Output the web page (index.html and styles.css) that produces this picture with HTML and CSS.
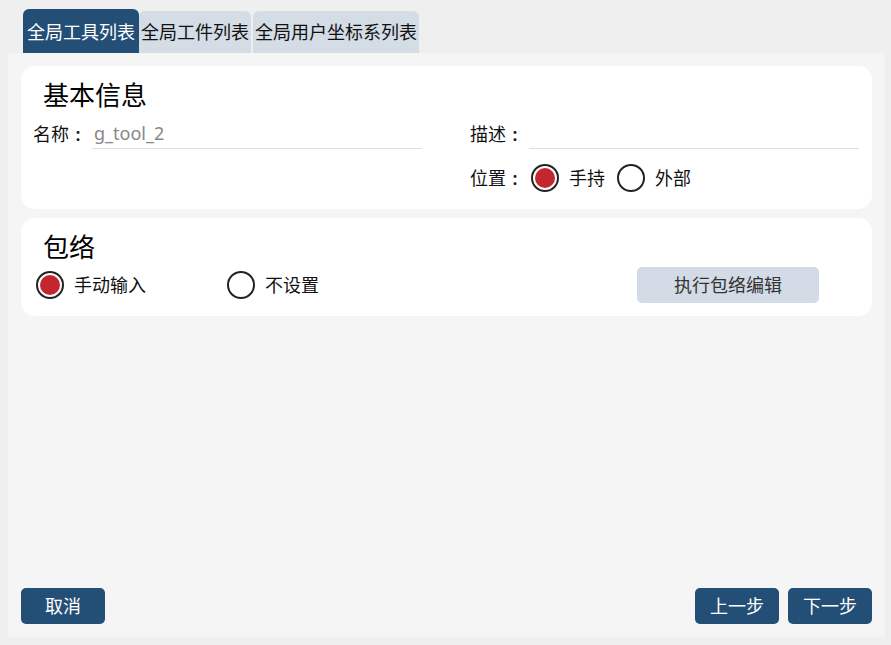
FILE: index.html
```html
<!DOCTYPE html>
<html lang="zh-CN">
<head>
<meta charset="utf-8">
<title>全局工具列表</title>
<link rel="stylesheet" href="styles.css">
</head>
<body>
  <nav class="tabs">
    <div class="tab active">全局工具列表</div>
    <div class="tab">全局工件列表</div>
    <div class="tab">全局用户坐标系列表</div>
  </nav>

  <main class="panel">
    <section class="card card-basic">
      <h2 class="card-title">基本信息</h2>
      <div class="form-grid">
        <div class="field">
          <span class="label">名称<span class="colon">:</span></span>
          <div class="input">g_tool_2</div>
        </div>
        <div class="field">
          <span class="label">描述<span class="colon">:</span></span>
          <div class="input"></div>
        </div>
        <div class="field"></div>
        <div class="field">
          <span class="label">位置<span class="colon">:</span></span>
          <div class="radio-group">
            <label class="radio-item"><span class="radio checked"></span><span>手持</span></label>
            <label class="radio-item"><span class="radio"></span><span>外部</span></label>
          </div>
        </div>
      </div>
    </section>

    <section class="card card-envelope">
      <h2 class="card-title">包络</h2>
      <div class="envelope-row">
        <label class="radio-item first"><span class="radio checked"></span><span>手动输入</span></label>
        <label class="radio-item grow"><span class="radio"></span><span>不设置</span></label>
        <button class="btn btn-light">执行包络编辑</button>
      </div>
    </section>

    <footer class="footer">
      <button class="btn btn-dark">取消</button>
      <div class="footer-right">
        <button class="btn btn-dark">上一步</button>
        <button class="btn btn-dark">下一步</button>
      </div>
    </footer>
  </main>
</body>
</html>
```

FILE: styles.css
```css
html {
  background: #efefef;
}

body {
  margin: 8px 6px 8px 8px;
  height: calc(100vh - 16px);
  display: flex;
  flex-direction: column;
  font-family: "Noto Sans", "Noto Sans CJK SC", sans-serif;
  font-size: 18px;
  color: #111;
}

/* tab strip */
.tabs {
  height: 45px;
  flex: none;
  display: flex;
  align-items: flex-end;
  padding-left: 17px;
}

.tab {
  height: 42px;
  line-height: 42px;
  padding: 0 2px;
  margin-right: 2px;
  background: #d4dce6;
  color: #111;
  border-radius: 6px 6px 0 0;
  white-space: nowrap;
}

.tab.active {
  height: 44px;
  line-height: 46px;
  padding: 0 4px;
  margin-left: -2px;
  margin-right: 0;
  background: #234e76;
  color: #fff;
}

/* content panel */
.panel {
  flex: 1;
  background: #f5f5f5;
  padding: 13px;
  display: flex;
  flex-direction: column;
  gap: 9px;
}

.card {
  background: #fff;
  border-radius: 14px;
  padding: 14px 13px 16px 12px;
}

.card-title {
  margin: 0 0 0 10px;
  font-size: 26px;
  line-height: 30px;
  font-weight: normal;
  color: #000;
}

.form-grid {
  margin-top: 8px;
  display: grid;
  grid-template-columns: 1fr 1fr;
  column-gap: 48px;
  row-gap: 14px;
}

.field {
  display: flex;
  align-items: center;
  min-height: 30px;
  line-height: 30px;
}

.label {
  display: flex;
  white-space: nowrap;
}

/* the colon takes a full-width cell, centred */
.colon {
  width: 1em;
  text-align: center;
  font-weight: 600;
}

.input {
  flex: 1;
  height: 30px;
  margin-left: 5px;
  padding-left: 2px;
  border-bottom: 1px solid #dedede;
  color: #888;
  line-height: 30px;
}

.radio-group {
  display: flex;
  align-items: center;
  margin-left: 7px;
}

.radio-item {
  display: flex;
  align-items: center;
  gap: 10px;
  margin-right: 12px;
  line-height: 30px;
  white-space: nowrap;
}

.radio {
  box-sizing: border-box;
  width: 28px;
  height: 28px;
  border: 2px solid #222;
  border-radius: 50%;
  display: flex;
  align-items: center;
  justify-content: center;
  flex: none;
}

.radio.checked::after {
  content: "";
  width: 20px;
  height: 20px;
  border-radius: 50%;
  background: #c3262f;
}

/* envelope card */
.card-envelope {
  padding-bottom: 13px;
}

.envelope-row {
  margin-top: 5px;
  height: 36px;
  display: flex;
  align-items: center;
}

.radio-item.first {
  width: 191px;
  margin: 0 0 0 3px;
}

.radio-item.grow {
  flex: 1;
  margin: 0;
}

.btn {
  border: none;
  font-family: inherit;
  font-size: 18px;
  line-height: 36px;
  height: 36px;
  padding: 0;
  cursor: pointer;
}

.btn-light {
  width: 182px;
  margin-right: 40px;
  background: #d3dbe6;
  color: #333;
  border-radius: 5px;
}

.btn-dark {
  width: 84px;
  background: #234e76;
  color: #fff;
  border-radius: 5px;
}

/* bottom actions */
.footer {
  margin-top: auto;
  display: flex;
  justify-content: space-between;
}

.footer-right {
  display: flex;
  gap: 9px;
}
```
